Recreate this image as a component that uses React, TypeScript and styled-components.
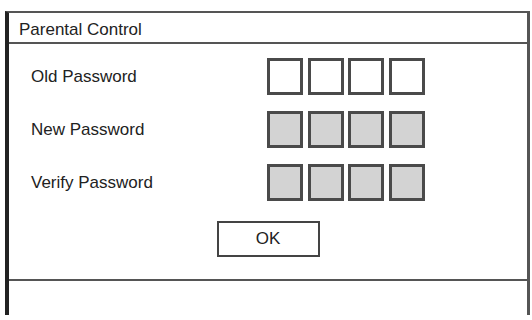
import React from 'react'
import styled, { createGlobalStyle } from 'styled-components'

const GlobalStyle = createGlobalStyle`
  html, body {
    margin: 0;
    padding: 0;
    background: #ffffff;
  }
  body {
    font-family: 'Liberation Sans', Arial, sans-serif;
    color: #222222;
  }
`

const Page = styled.div`
  width: 532px;
  height: 320px;
  padding: 11px 0 0 5px;
  box-sizing: border-box;
`

const Frame = styled.div`
  width: 525px;
  height: 304px;
  box-sizing: border-box;
  border-left: 4px solid #222222;
  border-top: 2px solid #555555;
  border-right: 3px solid #555555;
  display: flex;
  flex-direction: column;
`

const Header = styled.div`
  height: 31px;
  box-sizing: border-box;
  padding: 7px 0 0 10px;
  border-bottom: 2px solid #555555;
  font-size: 17px;
  line-height: 20px;
`

const Body = styled.div`
  display: flex;
  flex-direction: column;
  gap: 16px;
  padding: 14px 0 22px 22px;
  border-bottom: 2px solid #555555;
`

const Row = styled.div`
  display: grid;
  grid-template-columns: 236px auto;
  align-items: center;
  height: 37px;
`

const Label = styled.span`
  font-size: 17px;
  line-height: 20px;
`

const Digits = styled.div`
  display: flex;
  gap: 4.5px;
`

interface DigitProps {
  $filled?: boolean
}

const Digit = styled.div<DigitProps>`
  width: 36px;
  height: 37px;
  box-sizing: border-box;
  border: 3px solid #4a4a4a;
  background: ${({ $filled }) => ($filled ? '#d3d3d3' : '#ffffff')};
`

const Actions = styled.div`
  display: flex;
  justify-content: center;
  margin: 4px 0 0 -22px;
`

const OkButton = styled.button`
  width: 103px;
  height: 36px;
  box-sizing: border-box;
  border: 2px solid #444444;
  background: #ffffff;
  font-family: 'Liberation Sans', Arial, sans-serif;
  font-size: 17px;
  color: #222222;
  padding: 0;
`

const fields = [
  { label: 'Old Password', filled: false },
  { label: 'New Password', filled: true },
  { label: 'Verify Password', filled: true },
]

const App: React.FC = () => (
  <>
    <GlobalStyle />
    <Page>
      <Frame>
        <Header>Parental Control</Header>
        <Body>
          {fields.map((f) => (
            <Row key={f.label}>
              <Label>{f.label}</Label>
              <Digits>
                {[0, 1, 2, 3].map((i) => (
                  <Digit key={i} $filled={f.filled} />
                ))}
              </Digits>
            </Row>
          ))}
          <Actions>
            <OkButton>OK</OkButton>
          </Actions>
        </Body>
      </Frame>
    </Page>
  </>
)

export default App
